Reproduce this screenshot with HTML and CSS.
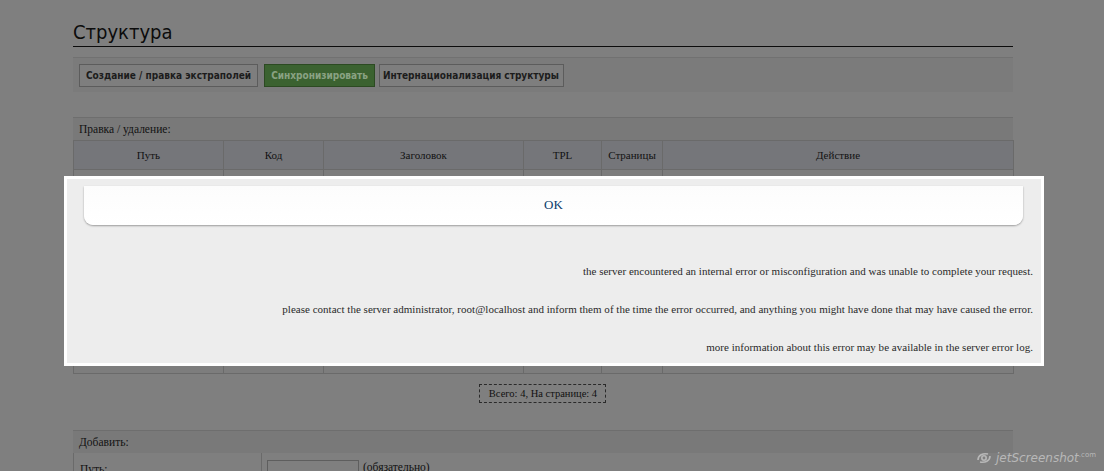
FILE: index.html
```html
<!DOCTYPE html>
<html lang="ru">
<head>
<meta charset="utf-8">
<title>Структура</title>
<link rel="stylesheet" href="styles.css">
</head>
<body>
<div class="page">
  <h1 class="title">Структура</h1>
  <div class="toolbar">
    <button class="btn">Создание / правка экстраполей</button>
    <button class="btn btn-green">Синхронизировать</button>
    <button class="btn btn-last">Интернационализация структуры</button>
  </div>

  <div class="section">
    <div class="section-head">Правка / удаление:</div>
    <table class="grid">
      <colgroup>
        <col class="c1"><col class="c2"><col class="c3"><col class="c4"><col class="c5"><col class="c6">
      </colgroup>
      <thead>
        <tr><th>Путь</th><th>Код</th><th>Заголовок</th><th>TPL</th><th>Страницы</th><th>Действие</th></tr>
      </thead>
      <tbody>
        <tr><td></td><td></td><td></td><td></td><td></td><td></td></tr>
        <tr><td></td><td></td><td></td><td></td><td></td><td></td></tr>
        <tr><td></td><td></td><td></td><td></td><td></td><td></td></tr>
        <tr><td></td><td></td><td></td><td></td><td></td><td></td></tr>
      </tbody>
    </table>
  </div>

  <div class="pager-wrap"><span class="pager">Всего: 4, На странице: 4</span></div>

  <div class="section add">
    <div class="section-head">Добавить:</div>
    <div class="add-row">
      <div class="add-label">Путь:</div>
      <div class="add-field"><span class="input"></span><span class="hint">(обязательно)</span></div>
    </div>
  </div>
</div>

<div class="modal">
  <div class="ok-bar">OK</div>
  <div class="messages">
    <p>the server encountered an internal error or misconfiguration and was unable to complete your request.</p>
    <p>please contact the server administrator, root@localhost and inform them of the time the error occurred, and anything you might have done that may have caused the error.</p>
    <p>more information about this error may be available in the server error log.</p>
  </div>
</div>

<div class="watermark">
  <svg class="wm-icon" width="18" height="12" viewBox="0 0 18 12" aria-hidden="true">
    <circle cx="9" cy="6" r="2.2" fill="none" stroke="#b8b8b8" stroke-width="1.6"/>
    <path d="M3 8 C3 3 8 1 13 2" fill="none" stroke="#b8b8b8" stroke-width="1.6"/>
    <path d="M15 4 C15 9 10 11 5 10" fill="none" stroke="#b8b8b8" stroke-width="1.6"/>
  </svg>
  <span class="wm-text">jetScreenshot<sup>.com</sup></span>
</div>
</body>
</html>
```

FILE: styles.css
```css
html, body {
  margin: 0;
  padding: 0;
  background: #7f7f7f;
  height: 100%;
  overflow: hidden;
}
body {
  font-family: "Liberation Serif", serif;
  color: #111;
}
.page {
  width: 940px;
  margin-left: 73px;
  padding-top: 18px;
}
.title {
  margin: 0;
  font-family: "DejaVu Sans Condensed", "DejaVu Sans", sans-serif;
  font-weight: normal;
  font-size: 20px;
  line-height: 28px;
  color: #0c0c0c;
  border-bottom: 1px solid #0c0c0c;
  padding-bottom: 0;
}
.toolbar {
  margin-top: 10px;
  height: 35px;
  background: #7b7b7b;
  border-top: 1px solid #717171;
  display: flex;
  align-items: center;
  padding-left: 6px;
  box-sizing: border-box;
}
.btn {
  font-family: "DejaVu Sans Condensed", "DejaVu Sans", sans-serif;
  font-weight: bold;
  font-size: 10px;
  height: 23px;
  padding: 0 6px;
  background: #7e7e7e;
  border: 1px solid #5c5c5c;
  color: #1c1c1c;
  margin: 0;
}
.btn-green {
  background: #3b6230;
  border-color: #2c4a22;
  color: #8aa283;
  margin-left: 6px;
}
.btn-last {
  margin-left: 4px;
  padding: 0 4px 0 3px;
}
.section {
  margin-top: 25px;
}
.section-head {
  height: 23px;
  line-height: 22px;
  background: #797979;
  border-top: 1px solid #6e6e6e;
  font-size: 11.5px;
  padding-left: 6px;
  box-sizing: border-box;
  color: #121212;
}
.grid {
  width: 940px;
  border-collapse: collapse;
  table-layout: fixed;
}
.c1 { width: 150px; }
.c2 { width: 100px; }
.c3 { width: 200px; }
.c4 { width: 78px; }
.c5 { width: 61px; }
.c6 { width: 351px; }
.grid th, .grid td {
  border: 1px solid #6a6a6a;
  padding: 0;
}
.grid th {
  height: 28px;
  background: #75767a;
  font-weight: normal;
  font-size: 11px;
  color: #121212;
}
.grid td {
  height: 50px;
  background: #7d7d7d;
}
.pager-wrap {
  display: flex;
  justify-content: center;
  margin-top: 10px;
}
.pager {
  border: 1px dashed #2a2a2a;
  font-size: 10.5px;
  padding: 3px 8px 3px 9px;
  line-height: 11px;
  color: #111;
  margin-left: -1px;
}
.add {
  margin-top: 27px;
}
.add-row {
  display: flex;
  height: 30px;
  border-left: 1px solid #6a6a6a;
}
.add-label {
  width: 188px;
  border-right: 1px solid #6a6a6a;
  font-size: 11.5px;
  padding: 10px 0 0 6px;
  box-sizing: border-box;
}
.add-field {
  padding: 7px 0 0 5px;
  display: flex;
  align-items: flex-start;
  gap: 4px;
  font-size: 11.5px;
}
.input {
  display: block;
  width: 90px;
  height: 20px;
  border: 1px solid #5e5e5e;
  background: #7f7f7f;
}
.hint {
  padding-top: 1px;
}

.modal {
  position: absolute;
  left: 64px;
  top: 176px;
  width: 980px;
  height: 190px;
  box-sizing: border-box;
  border: 3px solid #ffffff;
  background: #ededed;
  padding: 7px 18px 0 17px;
}
.ok-bar {
  height: 39px;
  line-height: 38px;
  text-align: center;
  background: linear-gradient(#fcfcfc, #ffffff);
  border-radius: 0 0 9px 9px;
  box-shadow: 0 1px 2px rgba(0, 0, 0, 0.35);
  font-size: 13px;
  color: #0b3c6c;
}
.messages {
  margin-right: -10px;
  padding-top: 40px;
}
.messages p {
  margin: 0 0 26px 0;
  text-align: right;
  font-size: 11px;
  letter-spacing: 0.02px;
  line-height: 12px;
  color: #2a2a2a;
}
.watermark {
  position: absolute;
  right: 8px;
  bottom: 6px;
  display: flex;
  align-items: center;
  gap: 3px;
  font-family: "DejaVu Sans", sans-serif;
  font-style: italic;
  font-size: 12px;
  color: #b8b8b8;
}
.watermark sup {
  font-size: 7px;
  font-style: normal;
}
```
